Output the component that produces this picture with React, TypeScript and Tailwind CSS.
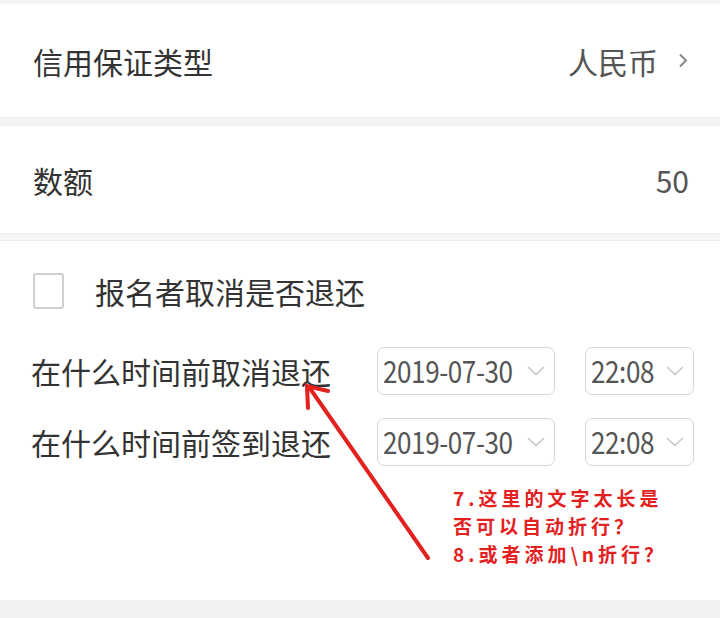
import React from "react";

const Chevron = () => (
  <svg width="18" height="10" viewBox="0 0 18 10" className="shrink-0">
    <polyline points="1,1 9,8.5 17,1" fill="none" stroke="#c4c4c4" strokeWidth="1.4" />
  </svg>
);

const Picker = ({ value, width, textWidth }: { value: string; width: string; textWidth: string }) => (
  <div
    className={`${width} h-[48px] flex items-center justify-between pl-[5px] pr-[9px] border-[1.5px] border-[#d6d6d6] rounded-[7px] bg-white`}
  >
    <span className={`${textWidth} block whitespace-nowrap`}>
      <span className="inline-block origin-left scale-x-[0.87] text-[30px] tracking-[-0.5px] text-[#555] leading-none">
        {value}
      </span>
    </span>
    <Chevron />
  </div>
);

const RefundRow = ({ label }: { label: string }) => (
  <div className="flex items-center pl-[31px] pr-[26px]">
    <span className="flex-1 text-[30px] text-[#333] leading-none whitespace-nowrap">{label}</span>
    <Picker value="2019-07-30" width="w-[178px]" textWidth="w-[134px]" />
    <div className="w-[30px]" />
    <Picker value="22:08" width="w-[109px]" textWidth="w-[62px]" />
  </div>
);

export default function App() {
  return (
    <div className="relative w-[720px] h-[618px] overflow-hidden bg-white font-['Noto_Sans_CJK_SC',sans-serif]">
      <div className="h-[4px] bg-[#f3f3f3]" />

      <div className="h-[113px] flex items-center justify-between pl-[33px] pr-[32px]">
        <span className="text-[30px] text-[#333] leading-none">信用保证类型</span>
        <div className="flex items-center gap-[20px]">
          <span className="text-[30px] text-[#555] leading-none">人民币</span>
          <svg width="10" height="15" viewBox="0 0 10 15">
            <polyline points="2,1.5 8,7.5 2,13.5" fill="none" stroke="#888" strokeWidth="2" />
          </svg>
        </div>
      </div>

      <div className="h-[9px] bg-[#f5f5f5] border-y border-[#eeeeee]" />

      <div className="h-[107px] flex items-center justify-between pl-[33px] pr-[31px]">
        <span className="text-[30px] text-[#333] leading-none">数额</span>
        <span className="text-[30px] text-[#555] leading-none">50</span>
      </div>

      <div className="h-[8px] bg-[#f5f5f5] border-y border-[#eeeeee]" />

      <div className="h-[359px] pt-[32px]">
        <div className="flex items-center pl-[33px]">
          <div className="w-[31px] h-[36px] border-2 border-[#cfcfcf] rounded-[3px]" />
          <span className="ml-[31px] text-[30px] text-[#333] leading-none">报名者取消是否退还</span>
        </div>
        <div className="mt-[38px] flex flex-col gap-[23px]">
          <RefundRow label="在什么时间前取消退还" />
          <RefundRow label="在什么时间前签到退还" />
        </div>
      </div>

      <div className="h-[18px] bg-[#f2f2f2]" />

      <svg className="absolute left-0 top-0" width="720" height="618" viewBox="0 0 720 618">
        <g stroke="#e3211f" strokeWidth="4" strokeLinecap="round" fill="none">
          <line x1="428" y1="558" x2="309" y2="387" />
          <polyline points="308,408 307,386 328,391" />
        </g>
      </svg>

      <div className="absolute left-[453px] top-[484px] text-[19px] leading-[28px] font-bold tracking-[4px] text-[#e3211f] whitespace-nowrap">
        <div>7.这里的文字太长是</div>
        <div>否可以自动折行？</div>
        <div>{"8.或者添加\\n折行？"}</div>
      </div>
    </div>
  );
}
